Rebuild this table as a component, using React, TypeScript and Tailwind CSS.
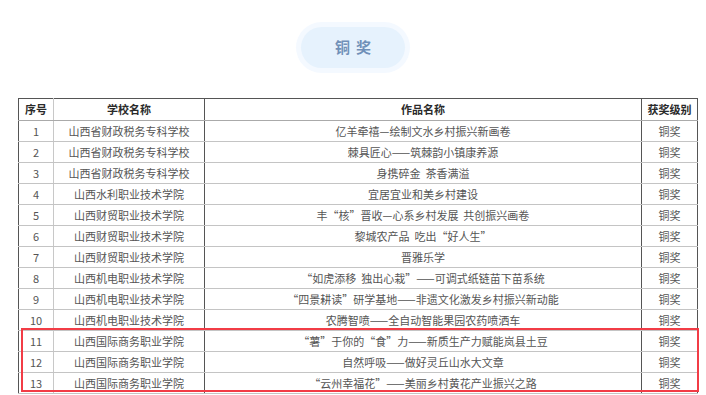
import React from 'react';

interface AwardRow {
  no: number;
  school: string;
  work: string;
  level: string;
}

const rows: AwardRow[] = [
  { no: 1, school: '山西省财政税务专科学校', work: '亿羊牵禧—绘制文水乡村振兴新画卷', level: '铜奖' },
  { no: 2, school: '山西省财政税务专科学校', work: '棘具匠心——筑棘韵小镇康养源', level: '铜奖' },
  { no: 3, school: '山西省财政税务专科学校', work: '身携碎金  茶香满溢', level: '铜奖' },
  { no: 4, school: '山西水利职业技术学院', work: '宜居宜业和美乡村建设', level: '铜奖' },
  { no: 5, school: '山西财贸职业技术学院', work: '丰“核”晋收—心系乡村发展  共创振兴画卷', level: '铜奖' },
  { no: 6, school: '山西财贸职业技术学院', work: '黎城农产品  吃出“好人生”', level: '铜奖' },
  { no: 7, school: '山西财贸职业技术学院', work: '晋雅乐学', level: '铜奖' },
  { no: 8, school: '山西机电职业技术学院', work: '“如虎添移  独出心栽”——可调式纸链苗下苗系统', level: '铜奖' },
  { no: 9, school: '山西机电职业技术学院', work: '“四景耕读”研学基地——非遗文化激发乡村振兴新动能', level: '铜奖' },
  { no: 10, school: '山西机电职业技术学院', work: '农腾智喷——全自动智能果园农药喷洒车', level: '铜奖' },
  { no: 11, school: '山西国际商务职业学院', work: '“薯”于你的“食”力——新质生产力赋能岚县土豆', level: '铜奖' },
  { no: 12, school: '山西国际商务职业学院', work: '自然呼吸——做好灵丘山水大文章', level: '铜奖' },
  { no: 13, school: '山西国际商务职业学院', work: '“云州幸福花”——美丽乡村黄花产业振兴之路', level: '铜奖' },
];

export default function App() {
  return (
    <div className="relative w-[706px] h-[395px] overflow-hidden bg-white font-['Noto_Sans_CJK_SC',sans-serif]">
      <div className="flex justify-center pt-[22px]">
        <div className="rounded-full bg-[#f4f9ff] p-[5px]">
          <div className="flex h-[41px] w-[104px] items-center justify-center rounded-full bg-[#e6f2fd] text-[15px] font-bold tracking-[6px] text-[#7090b8]">
            <span className="pl-[6px]">铜奖</span>
          </div>
        </div>
      </div>

      <div className="mt-[25px] pl-[18px]">
        <table className="w-[679px] table-fixed border-collapse text-[11px] leading-none text-[#555]">
          <colgroup>
            <col className="w-[35px]" />
            <col className="w-[151px]" />
            <col className="w-[437px]" />
            <col className="w-[56px]" />
          </colgroup>
          <thead>
            <tr className="h-[22px] text-[#2a2a2a]">
              <th className="border border-[#555] border-b-[#aaa] border-r-[#c8c8c8] font-bold">序号</th>
              <th className="border border-[#555] border-b-[#aaa] border-l-[#c8c8c8] font-bold">学校名称</th>
              <th className="border border-[#555] border-b-[#aaa] font-bold">作品名称</th>
              <th className="border border-[#555] border-b-[#aaa] font-bold">获奖级别</th>
            </tr>
          </thead>
          <tbody>
            {rows.map((r) => (
              <tr key={r.no} className="h-[21px]">
                <td className="border-b border-l border-r border-b-[#c4c4c4] border-l-[#555] border-r-[#c8c8c8] text-center">{r.no}</td>
                <td className="border-b border-r border-b-[#c4c4c4] border-r-[#555] text-center">{r.school}</td>
                <td className="whitespace-pre border-b border-r border-b-[#c4c4c4] border-r-[#555] text-center">{r.work}</td>
                <td className="border-b border-r border-b-[#c4c4c4] border-r-[#555] text-center">{r.level}</td>
              </tr>
            ))}
          </tbody>
        </table>
      </div>

      {/* red annotation box over rows 11-13 */}
      <div className="pointer-events-none absolute left-[21px] top-[328px] h-[64px] w-[678px] border-2 border-[#f23c46]" />
    </div>
  );
}
